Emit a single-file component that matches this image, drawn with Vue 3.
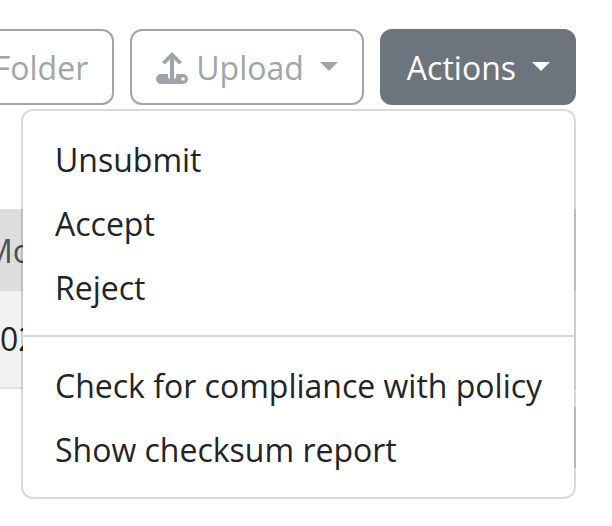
<template>
  <div class="page">
    <div class="toolbar">
      <button class="btn btn-outline">Folder</button>
      <button class="btn btn-outline">
        <svg class="upload-icon" viewBox="0 0 32 32" aria-hidden="true">
          <path d="M16 0l10 10-2.600 2.600L18 7.400V27h-4V7.400L8.600 12.600 6 10z" />
          <path fill-rule="evenodd" d="M5 22h7v3a2 2 0 0 0 2 2h4a2 2 0 0 0 2-2v-3h7a5 5 0 0 1 0 10H5a5 5 0 0 1 0-10zm22 3.200a1.800 1.800 0 1 0 0 3.600 1.800 1.800 0 0 0 0-3.600z" />
        </svg>
        Upload
        <span class="caret"></span>
      </button>
      <div class="actions">
        <button class="btn btn-solid">
          Actions
          <span class="caret"></span>
        </button>
        <ul class="menu">
          <li v-for="item in topItems" :key="item">{{ item }}</li>
          <li class="divider"></li>
          <li v-for="item in bottomItems" :key="item">{{ item }}</li>
        </ul>
      </div>
    </div>
    <div class="table">
      <div class="table-head">Modified</div>
      <div class="table-row">02</div>
    </div>
    <div class="pager"></div>
  </div>
</template>

<script setup>
const topItems = ['Unsubmit', 'Accept', 'Reject'];
const bottomItems = ['Check for compliance with policy', 'Show checksum report'];
</script>

<style>
html,
body {
  margin: 0;
  background: #fff;
  overflow: hidden;
}
</style>

<style scoped>
.page {
  width: 612px;
  height: 526px;
  overflow: hidden;
  padding: 29px 36px 0 0;
  box-sizing: border-box;
  font-family: "Open Sans", sans-serif;
  font-size: 32px;
  line-height: 48px;
  color: #212529;
}

.toolbar {
  display: flex;
  justify-content: flex-end;
  gap: 16px;
}

.btn {
  display: flex;
  align-items: center;
  flex: none;
  height: 76px;
  padding: 2px 24px 0;
  box-sizing: border-box;
  border-radius: 12px;
  font: inherit;
}

.btn-outline {
  border: 2px solid #a0a5aa;
  background: #fff;
  color: #a0a5aa;
}

.btn-solid {
  padding-left: 25px;
  border: 2px solid #6c757d;
  background: #6c757d;
  color: #fff;
}

.upload-icon {
  width: 32px;
  height: 32px;
  margin-right: 8px;
  fill: currentColor;
}

.caret {
  width: 0;
  height: 0;
  margin: -4px 0 0 16px;
  border-top: 9.600px solid currentColor;
  border-left: 9.600px solid transparent;
  border-right: 9.600px solid transparent;
}

.actions {
  position: relative;
}

.menu {
  position: absolute;
  z-index: 2;
  top: 80px;
  right: 0;
  width: 555px;
  margin: 0;
  padding: 16px 0;
  box-sizing: border-box;
  list-style: none;
  background: #fff;
  background-clip: padding-box;
  border: 2px solid rgba(0, 0, 0, 0.15);
  border-radius: 12px;
}

.menu li {
  padding: 9px 32px 7px;
  white-space: nowrap;
}

.menu .divider {
  height: 0;
  margin: 16px 0;
  padding: 0;
  border-top: 2px solid rgba(0, 0, 0, 0.15);
}

.table {
  margin-top: 104px;
  margin-left: -40px;
}

.table-head {
  height: 82px;
  padding: 18px 0 0 24px;
  box-sizing: border-box;
  background: #ddd;
  color: #495057;
}

.table-row {
  height: 98px;
  padding: 24px 0 0 40px;
  box-sizing: border-box;
  background: #f2f2f2;
  border-bottom: 2px solid #dee2e6;
}

.pager {
  width: 120px;
  height: 61px;
  margin: 18px 0 0 auto;
  background: #d6d6d6;
}
</style>
